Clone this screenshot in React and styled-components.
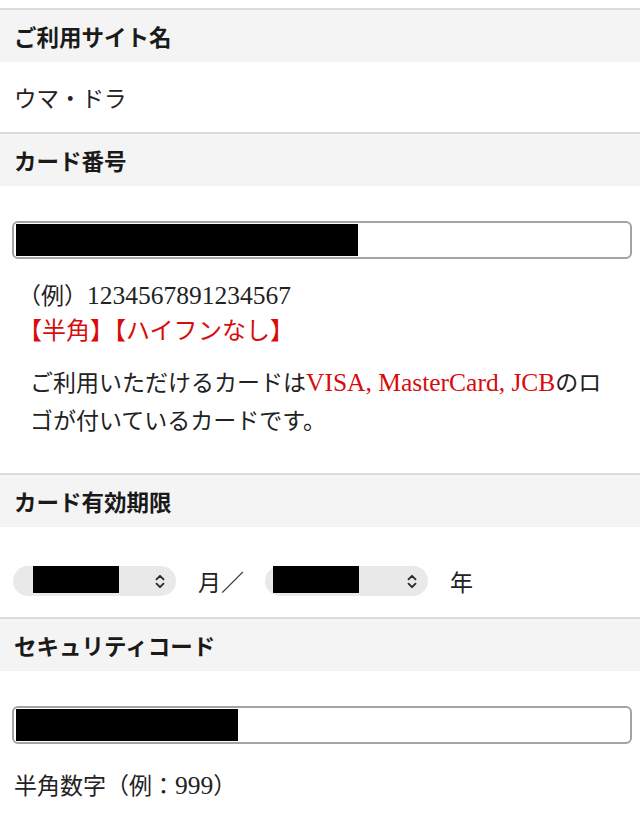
import React from 'react';
import styled, { createGlobalStyle } from 'styled-components';

const GlobalStyle = createGlobalStyle`
  body {
    margin: 0;
    background: #fff;
    color: #222;
    font-family: "Liberation Serif", "Noto Sans CJK JP", serif;
  }
`;

const Page = styled.div`
  padding-top: 8px;
  width: 640px;
`;

const SectionHead = styled.h2`
  margin: 0;
  height: 52px;
  border-top: 2px solid #dadada;
  background: #f4f4f4;
  padding: 0 14px;
  display: flex;
  align-items: center;
  font-family: "Noto Sans CJK JP", sans-serif;
  font-size: 22.5px;
  font-weight: 700;
  color: #1a1a1a;
`;

const Body = styled.div`
  padding: ${({ $pad }) => $pad || '0'};
  font-size: 23px;
`;

const Plain = styled.div`
  height: 70px;
  display: flex;
  align-items: center;
  padding: 0 14px;
  font-family: "Noto Sans CJK JP", sans-serif;
  font-size: 22.5px;
`;

const Field = styled.div`
  margin: 0 8px 0 12px;
  height: 38px;
  box-sizing: border-box;
  border: 2px solid #a3a3a3;
  border-radius: 6px;
  padding: 1px 2px;
  display: flex;
`;

const Redacted = styled.div`
  width: ${({ $w }) => $w}px;
  height: 100%;
  background: #000;
`;

const Line = styled.div`
  height: ${({ $lh }) => $lh || 35}px;
  line-height: ${({ $lh }) => $lh || 35}px;
  padding-left: ${({ $indent }) => $indent || 18}px;
  margin-top: ${({ $mt }) => $mt || 0}px;
  color: ${({ $red }) => ($red ? '#d80c0c' : '#222')};
  font-size: ${({ $size }) => $size || 23}px;
  white-space: nowrap;
`;

const Paragraph = styled.p`
  margin: 16px 0 0;
  padding-left: 30px;
  font-size: 23px;
  line-height: 38px;
  white-space: nowrap;
`;

const Latin = styled.span`
  font-size: 25.5px;
  line-height: 1;
  color: ${({ $red }) => ($red ? '#d80c0c' : 'inherit')};
`;

const Row = styled.div`
  display: flex;
  align-items: center;
  padding-left: 13px;
  height: 30px;
`;

const Select = styled.div`
  width: 163px;
  height: 30px;
  border-radius: 15px;
  background: #e9e9e9;
  display: flex;
  align-items: flex-start;
  justify-content: space-between;
  padding: 0 11px 0 ${({ $inset }) => $inset}px;
  box-sizing: border-box;
`;

const SelectValue = styled.div`
  width: 86px;
  height: 27px;
  background: #000;
`;

const Arrows = styled.svg`
  align-self: center;
  width: 10px;
  height: 15px;
`;

const Unit = styled.span`
  margin: 0 ${({ $after }) => $after}px 0 22px;
  font-size: 23px;
  white-space: nowrap;
`;

function Chevrons() {
  return (
    <Arrows viewBox="0 0 10 15" fill="none" stroke="#2a2a2a" strokeWidth="1.9" strokeLinecap="round" strokeLinejoin="round">
      <path d="M1.5 5.3 L5 1.8 L8.5 5.3" />
      <path d="M1.5 9.7 L5 13.2 L8.5 9.7" />
    </Arrows>
  );
}

export default function App() {
  return (
    <Page>
      <GlobalStyle />
      <SectionHead>ご利用サイト名</SectionHead>
      <Plain>ウマ・ドラ</Plain>

      <SectionHead>カード番号</SectionHead>
      <Body $pad="35px 0 32px">
        <Field>
          <Redacted $w={342} />
        </Field>
        <Line $mt={20}>
          （例）<Latin>1234567891234567</Latin>
        </Line>
        <Line $red $size={24}>【半角】【ハイフンなし】</Line>
        <Paragraph>
          ご利用いただけるカードは<Latin $red>VISA, MasterCard, JCB</Latin>のロ
          <br />
          ゴが付いているカードです。
        </Paragraph>
      </Body>

      <SectionHead>カード有効期限</SectionHead>
      <Body $pad="39px 0 21px">
        <Row>
          <Select $inset={20}>
            <SelectValue />
            <Chevrons />
          </Select>
          <Unit $after={21}>月／</Unit>
          <Select $inset={8}>
            <SelectValue />
            <Chevrons />
          </Select>
          <Unit $after={0}>年</Unit>
        </Row>
      </Body>

      <SectionHead>セキュリティコード</SectionHead>
      <Body $pad="35px 0 20px">
        <Field>
          <Redacted $w={222} />
        </Field>
        <Line $indent={14} $mt={25}>
          半角数字（例：<Latin>999</Latin>）
        </Line>
      </Body>
    </Page>
  );
}
